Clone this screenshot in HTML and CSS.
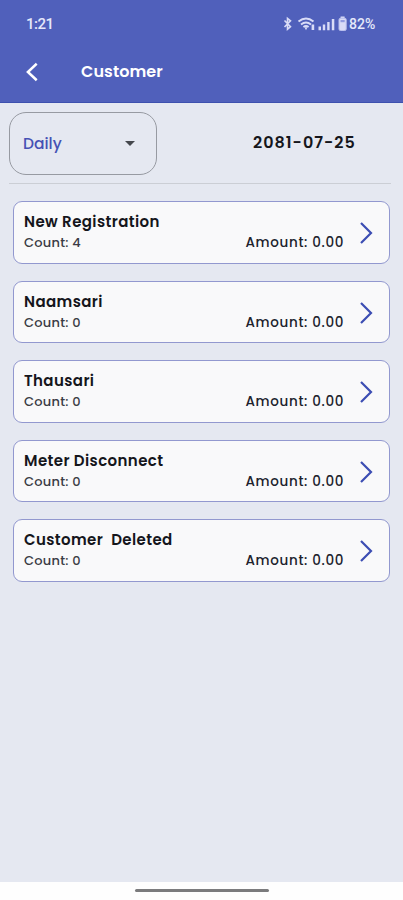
FILE: index.html
```
<!DOCTYPE html>
<html lang="en">
<head>
<meta charset="utf-8">
<title>Customer</title>
<link rel="stylesheet" href="styles.css">
</head>
<body>
<header class="top">
  <div class="status">
    <span class="time">1:21</span>
    <svg class="status-icons" width="66" height="18" viewBox="0 0 66 18" fill="none">
      <path d="M1.5 5.5l6 6.2-3 2.6V3.4l3 2.4-6 6.2" stroke="#d9dcf7" stroke-width="1.6"/>
      <path d="M15.5 6.6q7.5-6.2 15 0M18 9.4q5-4 10 0M20.4 12q2.6-2 5.2 0" stroke="#d9dcf7" stroke-width="1.9"/>
      <path d="M21.5 12.3h3L23 15.2zM28.6 9.5h2.6v5.5h-2.6z" fill="#d9dcf7"/>
      <path d="M35.5 11.5h2.5V15.2h-2.5zM39.8 9.5h2.4V15.2h-2.4zM44.2 7h2.4v8.2h-2.4zM48.8 4h2.5v11.2h-2.5z" fill="#d9dcf7"/>
      <path d="M57.6 1.5h4v2h-4z" fill="#d9dcf7"/>
      <rect x="56" y="3.2" width="7.2" height="12.3" rx="1.5" fill="#d9dcf7" stroke="#b9bfed"/>
      <path d="M57.5 5h4.2v2.2h-4.2z" fill="#939de0"/>
    </svg>
    <span class="battery">82%</span>
  </div>
  <div class="bar">
    <svg width="14" height="20" viewBox="0 0 14 20" fill="none" stroke="#fff" stroke-width="2.5" stroke-linecap="square"><path d="M10.8 2.6L2.9 10l7.9 7.4"/></svg>
    <h1>Customer</h1>
  </div>
</header>
<main>
  <section class="filter">
    <div class="select"><span>Daily</span><i class="caret"></i></div>
    <div class="date">2081-07-25</div>
  </section>
  <section class="list">
    <article class="card"><div class="info"><h2>New Registration</h2><div class="row"><span>Count: 4</span><span class="amount">Amount: 0.00</span></div></div><svg class="chev" viewBox="0 0 14 24"><path d="M2 2l10 10L2 22"/></svg></article>
    <article class="card"><div class="info"><h2>Naamsari</h2><div class="row"><span>Count: 0</span><span class="amount">Amount: 0.00</span></div></div><svg class="chev" viewBox="0 0 14 24"><path d="M2 2l10 10L2 22"/></svg></article>
    <article class="card"><div class="info"><h2>Thausari</h2><div class="row"><span>Count: 0</span><span class="amount">Amount: 0.00</span></div></div><svg class="chev" viewBox="0 0 14 24"><path d="M2 2l10 10L2 22"/></svg></article>
    <article class="card"><div class="info"><h2>Meter Disconnect</h2><div class="row"><span>Count: 0</span><span class="amount">Amount: 0.00</span></div></div><svg class="chev" viewBox="0 0 14 24"><path d="M2 2l10 10L2 22"/></svg></article>
    <article class="card"><div class="info"><h2>Customer  Deleted</h2><div class="row"><span>Count: 0</span><span class="amount">Amount: 0.00</span></div></div><svg class="chev" viewBox="0 0 14 24"><path d="M2 2l10 10L2 22"/></svg></article>
  </section>
</main>
<footer><div class="handle"></div></footer>
</body>
</html>
```
FILE: styles.css
```
* { box-sizing: border-box; }
body {
  margin: 0;
  height: 900px;
  display: flex;
  flex-direction: column;
  overflow: hidden;
  background: #e5e8f1;
  color: #15161c;
  font-family: Poppins, Inter, sans-serif;
}
h1, h2 { margin: 0; }
.top {
  height: 103px;
  background: #5060bb;
  border-bottom: 1px solid #3d50ae;
  color: #fff;
}
.status {
  height: 48px;
  padding: 0 26px 0 26px;
  display: flex;
  align-items: center;
  font-family: Roboto, sans-serif;
  font-weight: 500;
  color: #e6e8fa;
}
.time { font-size: 15px; letter-spacing: -0.5px; margin-right: auto; }
.status-icons { display: block; }
.battery { font-size: 14px; letter-spacing: 0; width: 28px; white-space: nowrap; }
.bar {
  height: 48px;
  padding-left: 25px;
  display: flex;
  align-items: center;
}
h1 { margin-left: 42px; font-size: 16px; font-weight: 600; line-height: 24px; letter-spacing: 0.1px; }
main { flex: 1; padding: 9px 9px 0; }
.filter {
  height: 72px;
  border-bottom: 1px solid #cbced5;
  display: flex;
  align-items: flex-start;
  margin-right: 3px;
}
.select {
  width: 148px;
  height: 63px;
  border: 1px solid #979aa2;
  border-radius: 17px;
  padding: 0 21px 0 13px;
  display: flex;
  align-items: center;
  justify-content: space-between;
  color: #4651b5;
  font-size: 15.5px;
  font-weight: 500;
}
.caret { border: 5.5px solid transparent; border-top-color: #45474d; border-bottom: 0; }
.date { margin-left: 96px; line-height: 62px; font-size: 16px; font-weight: 600; letter-spacing: 1px; white-space: nowrap; }
.list { padding: 17px 4px 0; display: flex; flex-direction: column; gap: 17px; }
.card {
  height: 62.5px;
  width: 377px;
  border: 1px solid #9298cf;
  border-radius: 9px;
  background: #f9f9fa;
  padding: 9px 16px 0 10px;
  display: flex;
}
.info { width: 320px; }
h2 { font-size: 15px; font-weight: 600; line-height: 22px; letter-spacing: 0.4px; white-space: pre; }
.row { display: flex; justify-content: space-between; font-size: 13px; font-weight: 500; line-height: 19px; letter-spacing: 0.25px; color: #3b3c45; }
.amount { color: #20222c; font-size: 13.5px; letter-spacing: 0.65px; }
.chev { width: 14px; height: 24px; margin: 10px 0 0 15px; fill: none; stroke: #3c4db3; stroke-width: 2.2; }
footer { height: 18px; background: #fefefe; padding-top: 7px; }
.handle { width: 134px; height: 3px; border-radius: 2px; background: #7b7b7d; margin: 0 auto; }
```
